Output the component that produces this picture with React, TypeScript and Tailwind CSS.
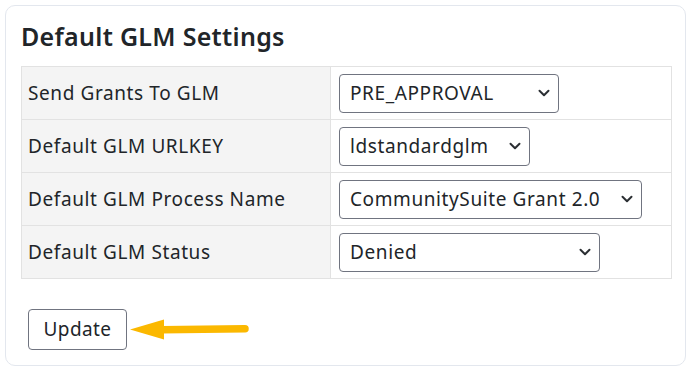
import { useState } from 'react';

const rows = [
  { label: 'Send Grants To GLM', value: 'PRE_APPROVAL', options: ['PRE_APPROVAL', 'APPROVAL', 'NEVER'], w: 'w-[220px]' },
  { label: 'Default GLM URLKEY', value: 'ldstandardglm', options: ['ldstandardglm'], w: 'w-[191px]' },
  { label: 'Default GLM Process Name', value: 'CommunitySuite Grant 2.0', options: ['CommunitySuite Grant 2.0'], w: 'w-[303px]' },
  { label: 'Default GLM Status', value: 'Denied', options: ['Denied', 'Approved', 'Pending'], w: 'w-[261px]' },
];

function Chevron() {
  return (
    <svg width="12" height="8" viewBox="0 0 12 8" className="pointer-events-none absolute right-[9px] top-1/2 -translate-y-1/2">
      <path d="M1.5 1.8 L6 6.2 L10.5 1.8" fill="none" stroke="#2b2f33" strokeWidth="2" strokeLinecap="round" strokeLinejoin="round" />
    </svg>
  );
}

export default function App() {
  const [values, setValues] = useState(rows.map((r) => r.value));

  return (
    <div className="w-[689px] h-[370px] bg-white pt-[5px] pl-[5px] font-['Noto_Sans',sans-serif] text-[#212529]">
      <div className="w-[681px] h-[361px] border border-[#e3e7ee] rounded-[10px] pl-[15px] pr-[14px] pt-[14px]">
        <h3 className="text-[25px] leading-[32px] font-semibold tracking-[0.3px] mb-[14px]">Default GLM Settings</h3>
        <table className="w-[651px] border-collapse text-[19px] tracking-[0.6px]">
          <tbody>
            {rows.map((r, i) => (
              <tr key={r.label} className="h-[53px]">
                <td className="w-[309px] bg-[#f4f4f4] border border-[#e2e2e2] pl-[6px] pr-2 align-middle">{r.label}</td>
                <td className="border border-[#e2e2e2] px-2 align-middle">
                  <div className={`relative ${r.w} h-[39px]`}>
                    <select
                      value={values[i]}
                      onChange={(e) => setValues(values.map((v, j) => (j === i ? e.target.value : v)))}
                      className="appearance-none w-full h-full rounded-[4px] border border-[#707480] bg-white pl-[10px] pr-8 text-[19px] tracking-[0.6px] text-[#212529] outline-none"
                    >
                      {r.options.map((o) => (
                        <option key={o}>{o}</option>
                      ))}
                    </select>
                    <Chevron />
                  </div>
                </td>
              </tr>
            ))}
          </tbody>
        </table>
        <div className="flex items-center mt-[30px] ml-[7px]">
          <button className="w-[99px] h-[41px] rounded-[4px] border border-[#707480] bg-white text-[19px] tracking-[0.4px] text-[#212529]">Update</button>
          <svg width="122" height="24" viewBox="0 0 122 24" className="ml-[2px]">
            <path d="M1 11.5 L35 1.5 L35 21.5 Z" fill="#fbb800" />
            <path d="M33 11.8 L116 10.8" stroke="#fbb800" strokeWidth="7.5" strokeLinecap="round" />
          </svg>
        </div>
      </div>
    </div>
  );
}
